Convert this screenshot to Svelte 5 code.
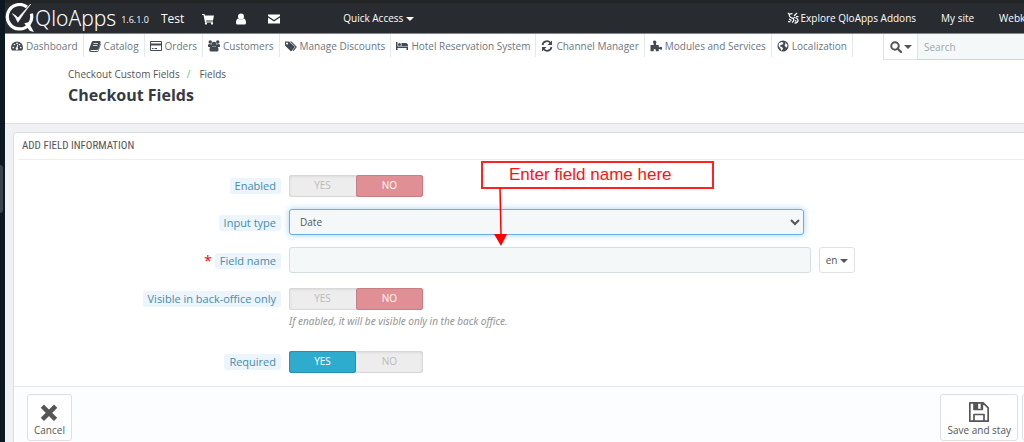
<script>
  let enabled = "no";
  let backOffice = "no";
  let required = "yes";
  let inputType = "Date";
  let fieldName = "";
  let search = "";

  const menu = [
    { icon: "dashboard", label: "Dashboard" },
    { icon: "book", label: "Catalog" },
    { icon: "card", label: "Orders" },
    { icon: "group", label: "Customers" },
    { icon: "tags", label: "Manage Discounts" },
    { icon: "bed", label: "Hotel Reservation System" },
    { icon: "refresh", label: "Channel Manager" },
    { icon: "puzzle", label: "Modules and Services" },
    { icon: "globe", label: "Localization" },
  ];
</script>

<svelte:head>
  <title>Checkout Fields</title>
</svelte:head>

{#snippet toggle(name, value, change)}
  <div class="switch" role="radiogroup" aria-label={name}>
    <label class:on={value === "yes"} class="yes">
      <input type="radio" {name} checked={value === "yes"} on:change={() => change("yes")} />YES
    </label>
    <label class:on={value === "no"} class="no">
      <input type="radio" {name} checked={value === "no"} on:change={() => change("no")} />NO
    </label>
  </div>
{/snippet}

{#snippet menuIcon(name)}
  <svg class="menu-icon" viewBox="0 0 24 24" aria-hidden="true">
    {#if name === "dashboard"}
      <path d="M0 15a12 12 0 0 1 24 0q0 4-2 6H2q-2-2-2-6z" />
      <g fill="#fff"><circle cx="4.500" cy="15" r="1.700" /><circle cx="7" cy="9" r="1.700" /><circle cx="12" cy="6.500" r="1.700" /><circle cx="17" cy="9" r="1.700" /><circle cx="19.500" cy="15" r="1.700" /><path d="M12.500 9l1.500.5-.7 5.500a2.500 2.500 0 1 1-2.300-.3z" /></g>
    {:else if name === "book"}
      <path d="M8 2h14q2 1 1 3l-4 13q-1 2-3 2H5q-2 0-2 1 0 1 2 1h13l5-15 1 1-5 14q-1 2-3 2H4q-4 0-4-5L5 5q1-3 3-3z" />
      <path d="M9 7h9M8 11h9" stroke="#fff" stroke-width="1.500" />
    {:else if name === "card"}
      <path fill-rule="evenodd" d="M2 2h20q2 0 2 2v16q0 2-2 2H2q-2 0-2-2V4q0-2 2-2zm0 2v3h20V4zm0 7v9h20v-9zm2 5h3v2H4zm5 0h5v2H9z" />
    {:else if name === "group"}
      <circle cx="4.500" cy="4" r="3.500" /><circle cx="19.500" cy="4" r="3.500" />
      <path d="M0 13V10q1-3 4-2l4 2v4H1zM24 13V10q-1-3-4-2l-4 2v4h7z" />
      <circle cx="12" cy="8.500" r="5" />
      <path d="M3 20q0-8 4-8 5 4 10 0 4 0 4 8 0 3-3 3H6q-3 0-3-3z" />
    {:else if name === "tags"}
      <path fill-rule="evenodd" d="M0 3h8l11 10q1 1 0 2l-6 7q-1 1-2 0L0 11zm4 2a2 2 0 1 0 .1 0z" />
      <path d="M10 3h3l10 10q1 1 0 2l-6 7-2-1 6-7z" />
    {:else if name === "bed"}
      <path d="M0 4h3v9h21v7h-3v-4H3v4H0z" /><circle cx="7" cy="9" r="3" /><path d="M11 6h8q5 0 5 6H11z" />
    {:else if name === "refresh"}
      <path d="M3 10a9 9 0 0 1 16-4M21 14a9 9 0 0 1-16 4" fill="none" stroke="currentColor" stroke-width="3.500" />
      <path d="M22 1v9h-9zM2 23v-9h9z" />
    {:else if name === "puzzle"}
      <path d="M1 10h6q1-2-.5-4Q5 1 9 1q4 0 4 4-2 3-.5 5h5v4q2 1 4-.5 3 0 3 3t-3 3q-2-2-4-1v4h-6q1-4-2-4.500-3 0-2 4.500H1z" />
    {:else}
      <circle cx="12" cy="12" r="11" />
      <path fill="#fff" d="M4 6l6-2 3 2-2 3-4 1-1 3 4 1 2 3-3 5-2-5-4-5zM16 4l5 6-1 5-3-1-2-4 2-2z" />
    {/if}
  </svg>
{/snippet}

<div class="page">
  <header class="topbar">
    <a class="brand" href="#home">
      <svg viewBox="0 0 28 28" aria-hidden="true">
        <path d="M20.500 3.800A11.400 11.400 0 1 0 24.600 10" fill="none" stroke="#fff" stroke-width="3" />
        <path d="M18 19l5 7 4 1-5-9z" fill="#fff" />
        <path d="M7 10q4 2 5 4L24 1q-7 9-12 17-2-5-5-8z" fill="#fff" stroke="#fff" stroke-width=".6" />
      </svg>
      <span class="name">QloApps</span>
      <span class="version">1.6.1.0</span>
    </a>
    <a class="shop" href="#shop">Test</a>
    <a class="notif" href="#orders" aria-label="Orders">
      <svg viewBox="0 0 24 24"><path d="M0 2h5l1 3h18l-2 10H8l.5 2H22v2H6L3 4H0z" /><circle cx="8" cy="21" r="2.300" /><circle cx="20" cy="21" r="2.300" /></svg>
    </a>
    <a class="notif" href="#customers" aria-label="Customers">
      <svg viewBox="0 0 24 24"><circle cx="12" cy="7" r="6" /><path d="M2 20q0-9 5-9 5 4 10 0 5 0 5 9 0 3-3 3H5q-3 0-3-3z" /></svg>
    </a>
    <a class="notif" href="#messages" aria-label="Messages">
      <svg viewBox="0 0 24 24"><path d="M0 3h24v3L12 14 0 6zM0 9l12 8 12-8v12H0z" /></svg>
    </a>
    <button class="quick" type="button">Quick Access <i class="caret"></i></button>
    <nav class="links" aria-label="Account">
      <a href="#addons">
        <svg viewBox="0 0 24 24" aria-hidden="true">
          <g fill="none" stroke="currentColor" stroke-width="2.500"><path d="M11 3Q3 3 5 8t7 4q4 5-2 9M14 11q8 1 8 6t-7 5M2 2l4 4M14 8l6-6M18 9h5M4 14l5 3M2 19h5M16 17l3 2" /></g>
        </svg>
        Explore QloApps Addons
      </a>
      <a href="#site">My site</a>
      <a href="#account">Webkul</a>
    </nav>
  </header>

  <div class="menubar">
    <nav aria-label="Main">
      {#each menu as item}
        <a href="#{item.icon}">{@render menuIcon(item.icon)}{item.label}</a>
      {/each}
    </nav>
    <form class="search" on:submit|preventDefault>
      <button type="button" aria-label="Search in">
        <svg viewBox="0 0 24 24"><circle cx="10" cy="10" r="7.500" fill="none" stroke="currentColor" stroke-width="4" /><path d="M15 15l7 7" stroke="currentColor" stroke-width="4.500" stroke-linecap="round" /></svg>
        <i class="caret"></i>
      </button>
      <input type="text" placeholder="Search" aria-label="Search" bind:value={search} />
    </form>
  </div>

  <div class="page-head">
    <div class="crumbs"><a href="#custom">Checkout Custom Fields</a><span>/</span><a href="#fields">Fields</a></div>
    <h1>Checkout Fields</h1>
  </div>

  <main>
    <form class="panel" on:submit|preventDefault>
      <h2>ADD FIELD INFORMATION</h2>

      <div class="fields">
        <div class="row">
          <div class="label"><span>Enabled</span></div>
          {@render toggle("Enabled", enabled, (v) => (enabled = v))}
        </div>
        <div class="row text">
          <div class="label"><label for="input-type">Input type</label></div>
          <select id="input-type" bind:value={inputType}>
            <option>Date</option>
            <option>Text</option>
            <option>Textarea</option>
          </select>
        </div>
        <div class="row text">
          <div class="label required"><label for="field-name">Field name</label></div>
          <div class="lang-field">
            <input id="field-name" type="text" bind:value={fieldName} />
            <button type="button">en <i class="caret"></i></button>
          </div>
        </div>
        <div class="row with-help">
          <div class="label"><span>Visible in back-office only</span></div>
          <div>
            {@render toggle("Visible in back-office only", backOffice, (v) => (backOffice = v))}
            <p class="help">If enabled, it will be visible only in the back office.</p>
          </div>
        </div>
        <div class="row last">
          <div class="label"><span>Required</span></div>
          {@render toggle("Required", required, (v) => (required = v))}
        </div>

        <div class="callout">
          Enter field name here
          <svg viewBox="0 0 14 58" aria-hidden="true"><path d="M6 0l1 47" stroke="#f00" stroke-width="1.500" /><path d="M0 46h13L7 58z" fill="#f00" /></svg>
        </div>
      </div>

      <div class="panel-footer">
        <button type="button">
          <svg viewBox="0 0 24 24"><path d="M6 7l12 12M18 7L6 19" stroke="currentColor" stroke-width="5.500" stroke-linecap="square" /></svg>
          Cancel
        </button>
        <div class="save">
          <button type="submit">
            <svg viewBox="0 0 24 24"><path d="M1 1h16l6 6v16H1zM6 23v-8h12v8M6 1v8h10V1" fill="none" stroke="currentColor" stroke-width="2" stroke-linejoin="round" /><path d="M6 1h5v8H6zM14 2h2v6h-2z" /></svg>
            Save and stay
          </button>
          <button class="more" type="submit" aria-label="Save"></button>
        </div>
      </div>
    </form>
  </main>
</div>

<style>
  :global(body) {
    background: #eff1f4;
    overflow: hidden;
  }

  .page {
    position: relative;
    border-left: 5px solid #0c1922;
    min-height: 100vh;
    box-sizing: border-box;
    font-family: "Open Sans", "Noto Sans", sans-serif;
    font-size: 10px;
    color: #555;
  }

  /* drawer handle on the left edge */
  .page::before {
    content: "";
    position: absolute;
    top: 165px;
    left: -5px;
    width: 3px;
    height: 48px;
    background: #38444b;
    border-radius: 0 3px 3px 0;
  }

  a {
    color: inherit;
    text-decoration: none;
  }

  button,
  input,
  select {
    font: inherit;
    color: inherit;
    box-sizing: border-box;
  }

  svg {
    fill: currentColor;
    flex: none;
  }

  .caret {
    display: inline-block;
    border: 4px solid transparent;
    border-top-color: currentColor;
    border-bottom: 0;
    vertical-align: middle;
  }

  .topbar {
    display: flex;
    align-items: center;
    height: 34px;
    box-sizing: border-box;
    background: #282b30;
    border-top: 3px solid #232425;
    border-bottom: 1px solid #85878a;
    color: #fff;
    white-space: nowrap;
  }

  .brand {
    display: flex;
    align-items: center;
  }

  .brand svg {
    width: 30px;
    height: 30px;
  }

  .name {
    font-family: "Noto Sans", sans-serif;
    font-size: 21px;
    font-weight: 300;
  }

  .version {
    font-size: 9px;
    margin: 3px 12px 0 5px;
  }

  .shop {
    font-size: 12px;
    margin-right: 18px;
  }

  .notif {
    display: flex;
    margin-right: 21px;
    padding-top: 2px;
  }

  .notif svg {
    width: 12px;
    height: 12px;
  }

  .quick {
    background: none;
    border: 0;
    padding: 0;
    margin-left: 42px;
  }

  .links {
    display: flex;
    gap: 25px;
    margin-left: auto;
    margin-right: -10px;
  }

  .links a {
    display: flex;
    align-items: center;
    gap: 2px;
  }

  .links svg {
    width: 12px;
    height: 12px;
  }

  .menubar {
    display: flex;
    justify-content: space-between;
    height: 26px;
    background: #fff;
    white-space: nowrap;
  }

  .menubar nav {
    display: flex;
    align-items: flex-start;
    padding-left: 1px;
    color: #6c7680;
  }

  .menubar nav a {
    display: flex;
    align-items: center;
    gap: 3px;
    height: 23px;
    padding: 0 5px;
    border-right: 1px solid #e6e8ea;
  }

  .menu-icon {
    width: 12px;
    height: 12px;
    color: #414a52;
  }

  .search {
    display: flex;
    width: 141px;
  }

  .search button {
    display: flex;
    align-items: center;
    gap: 2px;
    padding: 0 6px;
    width: 35px;
    background: #fff;
    border: 1px solid #dfe3e6;
    border-top: 0;
  }

  .search svg {
    width: 12px;
    height: 12px;
  }

  .search input {
    flex: 1;
    min-width: 0;
    padding: 0 6px;
    border: 0;
    border-bottom: 1px solid #c7d6db;
    background: #f4f8f9;
  }

  .search input::placeholder {
    color: #a1a5a8;
  }

  .page-head {
    height: 64px;
    padding: 6px 63px 0;
    box-sizing: border-box;
    background: #fff;
    border-bottom: 1px solid #dcdee0;
  }

  .crumbs {
    line-height: 16px;
  }

  .crumbs span {
    color: #72c279;
    margin: 0 9px 0 7px;
  }

  h1 {
    margin: 2px 0 0;
    font-size: 16px;
    line-height: 22px;
    color: #363a41;
  }

  main {
    padding: 8px 0 0 8px;
    overflow: hidden;
  }

  .panel {
    background: #fff;
    border: 1px solid #dbdee1;
    border-right: 0;
    border-radius: 4px 0 0 0;
  }

  h2 {
    margin: 0 0 0 4px;
    padding: 0 4px;
    border-bottom: 1px solid #eee;
    font-family: "Roboto Condensed", "Open Sans Condensed", sans-serif;
    font-size: 11px;
    font-weight: 400;
    line-height: 26px;
  }

  .fields {
    position: relative;
    padding: 15px 0 13px;
  }

  .row {
    display: grid;
    grid-template-columns: 267px 1fr;
    gap: 8px;
    margin-bottom: 12px;
  }

  .row.with-help {
    margin-top: 15px;
  }

  .row.last {
    margin: 22px 0 0;
  }

  .label {
    text-align: right;
    padding-top: 3px;
    font-size: 11px;
    line-height: 16px;
    color: #4a8bab;
  }

  .text .label {
    padding-top: 6px;
  }

  .label > * {
    display: inline-block;
    padding: 0 5px;
    background: #ebf5fb;
    border-radius: 3px;
  }

  .required::before {
    content: "*";
    color: #f00;
    font-size: 14px;
    margin-right: 3px;
    vertical-align: top;
  }

  .switch {
    display: flex;
    width: 134px;
    height: 22px;
    background: #ededed;
    border-radius: 3px;
    box-shadow: inset 0 0 0 1px #d8d8d8, inset 0 1px 3px #ccc;
  }

  .switch label {
    position: relative;
    flex: 1;
    text-align: center;
    line-height: 21px;
    color: #bbb;
    border-radius: 3px;
  }

  .switch input {
    position: absolute;
    opacity: 0;
    margin: 0;
  }

  .switch .on {
    color: #fff;
  }

  .yes.on {
    background: #2eacce;
    box-shadow: inset 0 0 0 1px #2790ad;
  }

  .no.on {
    background: #e08f95;
    box-shadow: inset 0 0 0 1px #c97e84;
  }

  select,
  .lang-field input {
    height: 26px;
    background: #f4f8f9;
    border: 1px solid #d2dee2;
    border-radius: 3px;
  }

  select {
    width: 70%;
    padding: 0 3px 0 6px;
    border-color: #66afe9;
    outline: 0;
    box-shadow: 0 0 6px rgba(102, 175, 233, 0.6);
  }

  .lang-field {
    display: flex;
    gap: 8px;
  }

  .lang-field input {
    width: 71%;
    padding: 0 8px;
  }

  .lang-field button {
    width: 36px;
    padding: 0;
    background: #fff;
    border: 1px solid #dfe1e3;
    border-radius: 3px;
  }

  .help {
    margin: 3px 0 0;
    font-family: "Noto Sans", sans-serif;
    line-height: 16px;
    font-style: italic;
    color: #959595;
  }

  .callout {
    position: absolute;
    top: 1px;
    left: 467px;
    width: 233px;
    height: 28px;
    box-sizing: border-box;
    padding-left: 26px;
    border: 2px solid #f22;
    background: #fff;
    font-family: "Liberation Sans", sans-serif;
    font-size: 17px;
    line-height: 23px;
    color: #f11;
  }

  .callout svg {
    position: absolute;
    top: 25px;
    left: 11px;
    width: 14px;
    height: 58px;
  }

  .panel-footer {
    display: flex;
    justify-content: space-between;
    padding: 7px 0 9px 13px;
    border-top: 1px solid #e6e9ec;
    background: #fcfdfe;
  }

  .panel-footer button {
    display: flex;
    flex-direction: column;
    align-items: center;
    height: 47px;
    padding: 7px 6px 0;
    background: #fff;
    border: 1px solid #dde0e2;
    border-radius: 3px;
    line-height: 16px;
    white-space: nowrap;
  }

  .panel-footer svg {
    width: 20px;
    height: 20px;
  }

  .save {
    display: flex;
    gap: 4px;
    margin-right: -38px;
  }

  .panel-footer .more {
    width: 40px;
  }
</style>
